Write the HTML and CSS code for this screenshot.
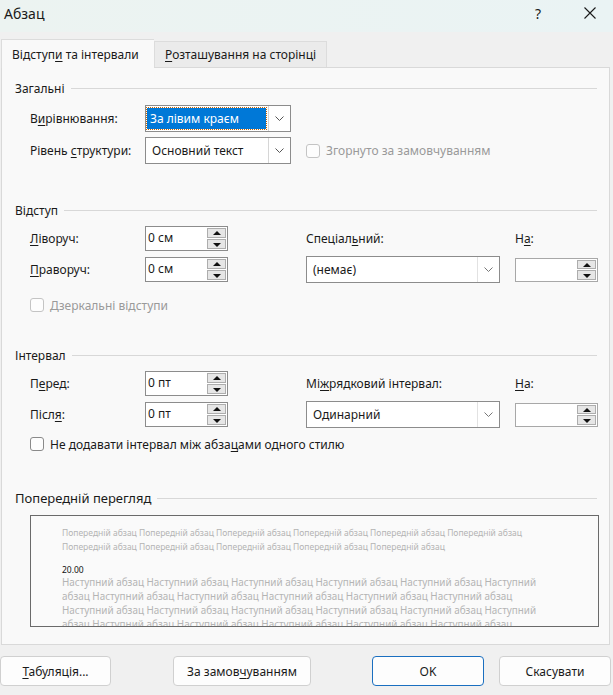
FILE: index.html
```html
<!DOCTYPE html>
<html lang="uk">
<head>
    <meta charset="UTF-8" />
    <title>Абзац</title>
    <link rel="stylesheet" href="styles.css">
</head>
<body>
    <div class="titlebar">
        <span class="title">Абзац</span>
        <span class="help">?</span>
        <svg class="close" width="12" height="12" viewBox="0 0 12 12">
            <path d="M0.5 0.5 L11.5 11.5 M11.5 0.5 L0.5 11.5" stroke="#1a1a1a" stroke-width="1.1" fill="none" />
        </svg>
    </div>

    <div class="tabs">
        <div class="tab active">Відступ<u>и</u> та інтервали</div>
        <div class="tab"><u>Р</u>озташування на сторінці</div>
    </div>

    <div class="panel">
        <!-- Загальні -->
        <div class="group-title first">Загальні</div>
        <div class="row">
            <span class="label">В<u>и</u>рівнювання:</span>
            <div class="select wide focused">
                <span class="value"><span class="hl">За лівим краєм</span></span>
                <span class="arrow"><svg width="9" height="5" viewBox="0 0 9 5"><path d="M0.5 0.5 L4.5 4.5 L8.5 0.5" stroke="#555" fill="none" /></svg></span>
            </div>
        </div>
        <div class="row second">
            <span class="label">Рівень <u>с</u>труктури:</span>
            <div class="select wide">
                <span class="value">Основний текст</span>
                <span class="arrow"><svg width="9" height="5" viewBox="0 0 9 5"><path d="M0.5 0.5 L4.5 4.5 L8.5 0.5" stroke="#555" fill="none" /></svg></span>
            </div>
            <label class="check disabled collapsed"><span class="box"></span>Згорнуто за замовчуванням</label>
        </div>

        <!-- Відступ -->
        <div class="group-title">Відступ</div>
        <div class="grid">
            <span class="label"><u>Л</u>іворуч:</span>
            <div class="spin"><span class="value">0 см</span><span class="btns"><span class="up"></span><span class="down"></span></span></div>
            <span class="label c3">Спеціал<u>ь</u>ний:</span>
            <span class="label c4">Н<u>а</u>:</span>

            <span class="label"><u>П</u>раворуч:</span>
            <div class="spin"><span class="value">0 см</span><span class="btns"><span class="up"></span><span class="down"></span></span></div>
            <div class="select c3">
                <span class="value">(немає)</span>
                <span class="arrow"><svg width="9" height="5" viewBox="0 0 9 5"><path d="M0.5 0.5 L4.5 4.5 L8.5 0.5" stroke="#777" fill="none" /></svg></span>
            </div>
            <div class="spin c4 small"><span class="value"></span><span class="btns"><span class="up"></span><span class="down"></span></span></div>
        </div>
        <label class="check disabled"><span class="box"></span>Дзеркальні відступи</label>

        <!-- Інтервал -->
        <div class="group-title interval-title">Інтервал</div>
        <div class="grid">
            <span class="label">П<u>е</u>ред:</span>
            <div class="spin"><span class="value">0 пт</span><span class="btns"><span class="up"></span><span class="down"></span></span></div>
            <span class="label c3">Мі<u>ж</u>рядковий інтервал:</span>
            <span class="label c4"><u>Н</u>а:</span>

            <span class="label">Післ<u>я</u>:</span>
            <div class="spin"><span class="value">0 пт</span><span class="btns"><span class="up"></span><span class="down"></span></span></div>
            <div class="select c3">
                <span class="value">Одинарний</span>
                <span class="arrow"><svg width="9" height="5" viewBox="0 0 9 5"><path d="M0.5 0.5 L4.5 4.5 L8.5 0.5" stroke="#777" fill="none" /></svg></span>
            </div>
            <div class="spin c4 small"><span class="value"></span><span class="btns"><span class="up"></span><span class="down"></span></span></div>
        </div>
        <label class="check spacing"><span class="box"></span>Не додавати інтервал між абза<u>ц</u>ами одного стилю</label>

        <!-- Попередній перегляд -->
        <div class="group-title preview-title">Попередній перегляд</div>
        <div class="preview">
            <div class="pl">Попередній абзац Попередній абзац Попередній абзац Попередній абзац Попередній абзац Попередній абзац</div>
            <div class="pl">Попередній абзац Попередній абзац Попередній абзац Попередній абзац Попередній абзац</div>
            <div class="pl current">20.00</div>
            <div class="pl next">Наступний абзац Наступний абзац Наступний абзац Наступний абзац Наступний абзац Наступний</div>
            <div class="pl next">абзац Наступний абзац Наступний абзац Наступний абзац Наступний абзац Наступний абзац</div>
            <div class="pl next">Наступний абзац Наступний абзац Наступний абзац Наступний абзац Наступний абзац Наступний</div>
            <div class="pl next">абзац Наступний абзац Наступний абзац Наступний абзац Наступний абзац Наступний абзац</div>
        </div>
    </div>

    <div class="buttons">
        <button class="b-tabs"><u>Т</u>абуляція...</button>
        <button class="b-default">За замов<u>ч</u>уванням</button>
        <button class="b-ok">OK</button>
        <button class="b-cancel">Скасувати</button>
    </div>
</body>
</html>
```

FILE: styles.css
```css
body {
    margin: 0;
    width: 613px;
    height: 695px;
    overflow: hidden;
    background-color: #f0f0f0;
    font-family: "Noto Sans", sans-serif;
    font-size: 12px;
    color: #1a1a1a;
}
u {
    text-decoration-thickness: 1px;
    text-underline-offset: 2px;
}

/* Fensterkopf */
.titlebar {
    height: 32px;
    display: flex;
    align-items: center;
    padding-left: 4px;
    background: linear-gradient(90deg, #ecf3f1, #eaf3f4);
}
.title {
    font-size: 14px;
    flex: 1;
    margin-top: -6px;
}
.help {
    font-size: 14px;
    margin-right: 43px;
    margin-top: -6px;
}
.close {
    margin-right: 17px;
    margin-top: -6px;
}

/* Reiter */
.tabs {
    display: flex;
    align-items: flex-end;
    padding-left: 1px;
    margin-top: 7px;
    position: relative;
    z-index: 1;
}
.tab {
    height: 25px;
    line-height: 25px;
    padding: 0 10px;
    background-color: #ebebeb;
    border: 1px solid #dcdcdc;
    border-bottom: none;
}
.tab.active {
    width: 132px;
    height: 28px;
    line-height: 30px;
    background-color: #f9f9f9;
    margin-bottom: -1px;
    border-right: none;
}

.panel {
    margin: 0 3px 0 1px;
    height: 576px;
    border: 1px solid #d9d9d9;
    background-color: #f9f9f9;
    padding-left: 13px;
    padding-right: 12px;
}

/* Gruppenüberschrift mit Linie */
.group-title {
    display: flex;
    align-items: center;
    height: 16px;
    margin-top: 38px;
    white-space: nowrap;
}
.group-title::after {
    content: "";
    flex: 1;
    height: 1px;
    background-color: #d8d8d8;
    margin-left: 6px;
}
.group-title.first {
    margin-top: 12px;
}
.group-title.interval-title {
    margin-top: 34px;
}
.group-title.preview-title {
    font-size: 13px;
}

.row {
    display: flex;
    align-items: center;
    padding-left: 15px;
    margin-top: 9px;
}
.row.second {
    margin-top: 5px;
}
.label {
    width: 115px;
    white-space: nowrap;
}

/* Auswahlfelder */
.select {
    display: flex;
    height: 25px;
    border: 1px solid #8c8c8c;
    background-color: #fff;
}
.select.wide {
    width: 144px;
}
.select .value {
    flex: 1;
    padding: 2px 2px;
    line-height: 21px;
    padding-left: 6px;
}
.select.focused .value {
    padding-left: 1px;
}
.select .hl {
    display: block;
    background-color: #0078d7;
    color: #fff;
    padding-left: 3px;
    outline: 1px dotted #c86400;
}
.select .arrow {
    width: 21px;
    border-left: 1px solid #d6d6d6;
    display: flex;
    align-items: center;
    justify-content: center;
}

/* Raster für Einzüge und Abstände */
.grid {
    display: grid;
    grid-template-columns: 115px 83px 78px 194px 15px 83px;
    grid-template-rows: 25px 27px;
    row-gap: 5px;
    padding-left: 15px;
    margin-top: 8px;
    align-items: center;
}
.grid .c3 {
    grid-column: 4;
}
.grid .c4 {
    grid-column: 6;
}
.grid .select {
    height: 25px;
}
.grid .select .arrow {
    border-left-color: #e2e2e2;
}

/* Drehfelder */
.spin {
    display: flex;
    height: 23px;
    border: 1px solid #8c8c8c;
    background-color: #fff;
}
.spin.small {
    height: 22px;
    border-color: #a8a8a8;
}
.spin .value {
    flex: 1;
    line-height: 22px;
    padding-left: 2px;
}
.spin .btns {
    display: flex;
    flex-direction: column;
    justify-content: center;
    gap: 1px;
    padding: 1px 1px 1px 0;
}
.spin .up, .spin .down {
    width: 17px;
    height: 9px;
    background-color: #e6e6e6;
    border: 1px solid #adadad;
    position: relative;
}
.spin.small .up, .spin.small .down {
    height: 8px;
}
.spin .up::after, .spin .down::after {
    content: "";
    position: absolute;
    left: 5px;
    border-left: 4px solid transparent;
    border-right: 4px solid transparent;
}
.spin .up::after {
    top: 2px;
    border-bottom: 4px solid #111;
}
.spin .down::after {
    top: 3px;
    border-top: 4px solid #111;
}

/* Kontrollkästchen */
.check {
    display: flex;
    align-items: center;
    height: 16px;
    padding-left: 15px;
    margin-top: 14px;
}
.check .box {
    width: 12px;
    height: 12px;
    border: 1px solid #8a8a8a;
    border-radius: 3px;
    background-color: #fdfdfd;
    margin-right: 6px;
}
.check.disabled {
    color: #9a9a9a;
}
.check.disabled .box {
    border-color: #c4c4c4;
}
.check.collapsed {
    margin-top: 0;
}
.check.spacing {
    margin-top: 8px;
}

/* Vorschau */
.preview {
    margin: 9px 0 0 15px;
    width: 569px;
    height: 112px;
    border: 1px solid #6a6a6a;
    background-color: #fafafa;
    overflow: hidden;
    padding-left: 31px;
    box-sizing: border-box;
    padding-top: 10px;
}
.pl {
    font-size: 8.5px;
    line-height: 14px;
    color: #b4b4b4;
    white-space: nowrap;
}
.pl.current {
    color: #111;
    line-height: 11px;
    margin-top: 10px;
}
.pl.next {
    font-size: 9.9px;
}

/* Schaltflächen */
.buttons {
    display: flex;
    margin-top: 11px;
}
button {
    height: 30px;
    font-family: "Noto Sans", sans-serif;
    font-size: 12px;
    color: #1a1a1a;
    background-color: #fdfdfd;
    border: 1px solid #d0d0d0;
    border-radius: 4px;
}
.b-tabs {
    width: 111px;
}
.b-default {
    width: 138px;
    margin-left: 62px;
}
.b-ok {
    width: 112px;
    margin-left: 61px;
    border-color: #1a6fc0;
}
.b-cancel {
    width: 112px;
    margin-left: 15px;
}
```
